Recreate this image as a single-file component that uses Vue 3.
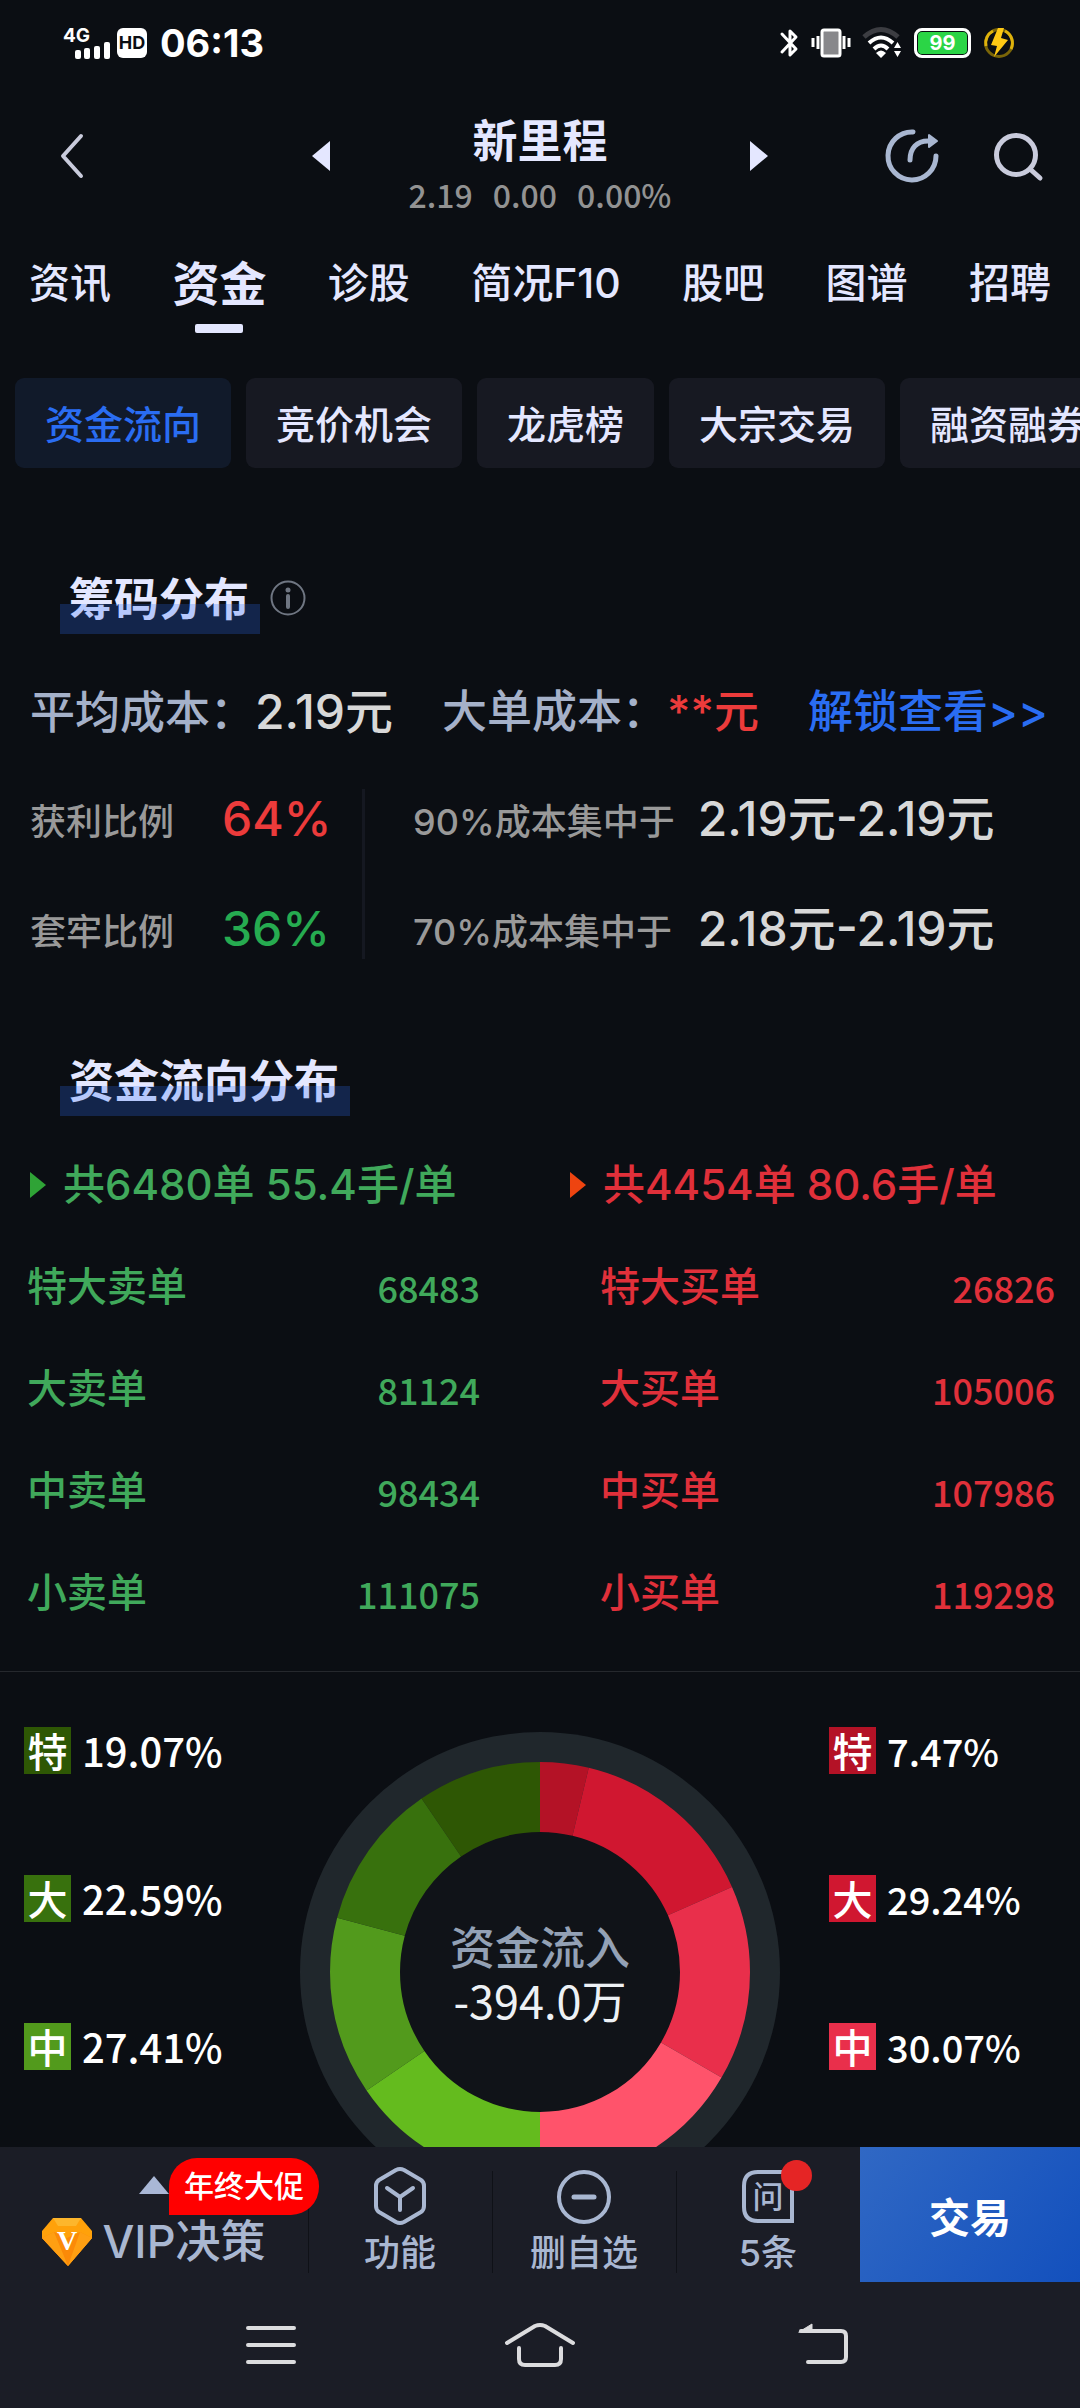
<template>
  <div class="page">
    <!-- system status bar -->
    <div class="status-bar">
      <div class="status-left">
        <svg class="signal" width="50" height="34" viewBox="0 0 50 34">
          <text x="0" y="16" class="net">4G</text>
          <rect x="12" y="24" width="6" height="9" rx="2" />
          <rect x="21" y="22" width="6" height="11" rx="2" />
          <rect x="31" y="20" width="6" height="13" rx="2" />
          <rect x="41" y="16" width="6" height="17" rx="2" />
        </svg>
        <span class="hd">HD</span>
        <span class="time">06:13</span>
      </div>
      <div class="status-right">
        <svg width="20" height="30" viewBox="0 0 20 30" fill="none" stroke="#fff" stroke-width="3" stroke-linejoin="round" stroke-linecap="round">
          <path d="M3 6 17 21 11 27V3L17 9 3 24" />
        </svg>
        <svg width="38" height="30" viewBox="0 0 38 30">
          <rect x="10" y="2" width="18" height="26" rx="2" fill="#88888b" stroke="#fff" stroke-width="3" />
          <path d="M1 10v9M6 8v13M32 8v13M37 10v9" stroke="#fff" stroke-width="3" />
        </svg>
        <svg width="38" height="30" viewBox="0 0 38 30" fill="none">
          <path d="M1 9Q18-6 35 9" stroke="#3c3d42" stroke-width="5" />
          <path d="M6 15Q18 4 30 15" stroke="#fff" stroke-width="4" />
          <path d="M11 21Q18 14 25 21" stroke="#fff" stroke-width="4" />
          <path d="M13 25Q18 20 23 25L18 30Z" fill="#fff" />
          <path d="M31 20 34.500 14 38 20ZM31 23H38L34.500 29Z" fill="#fff" />
        </svg>
        <div class="battery">99</div>
        <svg width="30" height="30" viewBox="0 0 30 30">
          <circle cx="15" cy="15" r="13.500" fill="none" stroke="#7a6508" stroke-width="3" />
          <path d="M2 18A13.500 13.500 0 0 1 9 3M21 3A13.500 13.500 0 0 1 27 21" fill="none" stroke="#dfb20c" stroke-width="3" />
          <path d="M14 0H20L17 10 24 12 10 29 13 18 7 17Z" fill="#ffc914" />
        </svg>
      </div>
    </div>

    <!-- stock header -->
    <header class="header">
      <button class="icon-btn back" aria-label="返回">
        <svg width="22" height="44" viewBox="0 0 22 44" fill="none" stroke="#c9cbdc" stroke-width="4" stroke-linecap="round" stroke-linejoin="round">
          <path d="M20 2 2 22 20 42" />
        </svg>
      </button>
      <div class="switcher">
        <button class="icon-btn" aria-label="上一只">
          <svg width="18" height="30" viewBox="0 0 18 30"><path d="M18 0V30L0 15Z" fill="#e4e7ff" /></svg>
        </button>
        <div class="stock">
          <h1>{{ stock.name }}</h1>
          <p>
            <span>{{ stock.price }}</span>
            <span>{{ stock.change }}</span>
            <span>{{ stock.percent }}</span>
          </p>
        </div>
        <button class="icon-btn" aria-label="下一只">
          <svg width="18" height="30" viewBox="0 0 18 30"><path d="M0 0V30L18 15Z" fill="#e4e7ff" /></svg>
        </button>
      </div>
      <div class="actions">
        <button class="icon-btn" aria-label="分享">
          <svg width="54" height="54" viewBox="0 0 54 54" fill="none" stroke="#a9b7d1" stroke-width="5" stroke-linecap="round">
            <path d="M28 3A24 24 0 1 0 51 27" />
            <path d="M25 31C25 19 32 12 43 12" />
            <path d="M44 6V18L52 12Z" fill="#a9b7d1" stroke-width="2" stroke-linejoin="round" />
          </svg>
        </button>
        <button class="icon-btn" aria-label="搜索">
          <svg width="50" height="50" viewBox="0 0 50 50" fill="none" stroke="#c9cbdc" stroke-width="5" stroke-linecap="round">
            <circle cx="22" cy="24" r="19.500" />
            <path d="M36 38 46 47" />
          </svg>
        </button>
      </div>
    </header>

    <nav class="tabs">
      <button
        v-for="tab in tabs"
        :key="tab"
        :class="['tab', { active: tab === activeTab }]"
        @click="activeTab = tab"
      >{{ tab }}</button>
    </nav>

    <nav class="chips">
      <button
        v-for="chip in chips"
        :key="chip"
        :class="['chip', { active: chip === activeChip }]"
        @click="activeChip = chip"
      >{{ chip }}</button>
    </nav>

    <main class="content">
      <section class="cost">
        <div class="title-row">
          <h2>筹码分布</h2>
          <button class="icon-btn" aria-label="说明">
            <svg width="36" height="36" viewBox="0 0 36 36">
              <circle cx="18" cy="18" r="16.500" fill="none" stroke="#6f7682" stroke-width="2" />
              <circle cx="18" cy="10" r="2.500" fill="#6f7682" />
              <path d="M18 16V27" stroke="#6f7682" stroke-width="4" stroke-linecap="round" />
            </svg>
          </button>
        </div>
        <div class="cost-line">
          <p>平均成本：<b>2.19元</b></p>
          <p>大单成本：<b class="red">**元</b></p>
          <a href="#">解锁查看&gt;&gt;</a>
        </div>
        <div class="ratios">
          <dl class="ratio-left">
            <dt>获利比例</dt><dd class="red">64%</dd>
            <dt>套牢比例</dt><dd class="green">36%</dd>
          </dl>
          <dl class="ratio-right">
            <dt>90%成本集中于</dt><dd>2.19元-2.19元</dd>
            <dt>70%成本集中于</dt><dd>2.18元-2.19元</dd>
          </dl>
        </div>
      </section>

      <section class="flow">
        <div class="title-row">
          <h2>资金流向分布</h2>
        </div>
        <div class="flow-grid">
          <div v-for="side in flow" :key="side.key" :class="['side', side.key]">
            <h3>{{ side.summary }}</h3>
            <table>
              <tbody>
                <tr v-for="row in side.rows" :key="row[0]">
                  <th scope="row">{{ row[0] }}</th>
                  <td>{{ row[1] }}</td>
                </tr>
              </tbody>
            </table>
          </div>
        </div>
      </section>

      <section class="chart">
        <ul class="legend">
          <li v-for="item in sells.slice(0, 3)" :key="item.tag">
            <i :style="{ background: item.color }">{{ item.tag }}</i>
            <span>{{ item.value }}%</span>
          </li>
        </ul>
        <svg class="donut" viewBox="0 0 480 480">
          <circle cx="240" cy="240" r="240" fill="#20272c" />
          <circle cx="240" cy="240" r="141" fill="#101318" />
          <g fill="none" stroke-width="70" transform="rotate(-90 240 240)">
            <circle
              v-for="arc in arcs"
              :key="arc.color"
              cx="240"
              cy="240"
              r="175"
              pathLength="200"
              :stroke="arc.color"
              :stroke-dasharray="`${arc.value} 200`"
              :stroke-dashoffset="-arc.start"
            />
          </g>
          <text x="240" y="233" class="donut-label">资金流入</text>
          <text x="240" y="287" class="donut-value">-394.0万</text>
        </svg>
        <ul class="legend right">
          <li v-for="item in buys.slice(0, 3)" :key="item.tag">
            <i :style="{ background: item.color }">{{ item.tag }}</i>
            <span>{{ item.value }}%</span>
          </li>
        </ul>
      </section>
    </main>

    <!-- bottom toolbar -->
    <footer class="toolbar">
      <button class="tool vip">
        <svg class="caret" width="30" height="18" viewBox="0 0 30 18"><path d="M15 0 30 18H0Z" fill="#a9b7d6" /></svg>
        <span class="promo">年终大促</span>
        <span class="vip-text">
          <svg width="50" height="48" viewBox="0 0 50 48">
            <path d="M11 0H39L50 13V20L26 48 0 20V13Z" fill="#ffa10a" />
            <path d="M11 0H39L34 8H16Z" fill="#fdb62c" />
            <path d="M0 20 12 14 25 20 38 14 50 20 26 48Z" fill="#fb8a08" />
            <path d="M0 20 12 14 26 48ZM50 20 38 14 26 48Z" fill="#ff9f12" />
            <text x="25" y="32" class="gem-v">V</text>
          </svg>
          VIP决策
        </span>
      </button>
      <button class="tool">
        <svg width="54" height="58" viewBox="0 0 54 58" fill="none" stroke="#a9b7d1" stroke-width="4" stroke-linecap="round" stroke-linejoin="round">
          <path d="M23 3Q27 1 31 3L48 13Q51 15 51 19V39Q51 43 48 45L31 55Q27 57 23 55L6 45Q3 43 3 39V19Q3 15 6 13Z" />
          <path d="M14 21 27 30 40 21M27 30V43" />
        </svg>
        功能
      </button>
      <button class="tool">
        <svg width="54" height="58" viewBox="0 0 54 58" fill="none" stroke="#a9b7d1" stroke-width="4" stroke-linecap="round">
          <circle cx="27" cy="30" r="25" />
          <path d="M17 30H37" stroke-width="5" />
        </svg>
        删自选
      </button>
      <button class="tool">
        <svg width="54" height="58" viewBox="0 0 54 58" fill="none" stroke="#a9b7d1" stroke-width="4">
          <path d="M51 54H17Q3 54 3 40V19Q3 5 17 5H51Z" />
          <text x="27" y="41" class="ask">问</text>
        </svg>
        <span class="dot"></span>
        5条
      </button>
      <button class="trade">交易</button>
    </footer>

    <!-- system navigation -->
    <div class="sys-nav">
      <button class="icon-btn" aria-label="菜单">
        <svg width="70" height="44" viewBox="0 0 70 44" stroke="#dcdcde" stroke-width="4" stroke-linecap="round">
          <path d="M14 5H60M14 22H60M14 39H60" />
        </svg>
      </button>
      <button class="icon-btn" aria-label="主页">
        <svg width="70" height="44" viewBox="0 0 70 44" fill="none" stroke="#dcdcde" stroke-width="4" stroke-linecap="round" stroke-linejoin="round">
          <path d="M2 20 30 3Q35 1 40 3L68 20" />
          <path d="M14 25V36Q14 42 20 42H50Q56 42 56 36V25" />
        </svg>
      </button>
      <button class="icon-btn" aria-label="后退">
        <svg width="70" height="44" viewBox="0 0 70 44" fill="none" stroke="#dcdcde" stroke-width="4" stroke-linecap="round">
          <path d="M25 8H65Q70 8 70 13V34Q70 39 65 39H32" />
          <path d="M23 9 36 1V9Z" fill="#dcdcde" stroke-width="1" />
        </svg>
      </button>
    </div>
  </div>
</template>

<script setup>
import { ref, computed } from 'vue'

const stock = { name: '新里程', price: '2.19', change: '0.00', percent: '0.00%' }

const tabs = ['资讯', '资金', '诊股', '简况F10', '股吧', '图谱', '招聘']
const activeTab = ref('资金')

const chips = ['资金流向', '竞价机会', '龙虎榜', '大宗交易', '融资融券']
const activeChip = ref('资金流向')

const flow = [
  {
    key: 'sell',
    summary: '共6480单 55.4手/单',
    rows: [['特大卖单', 68483], ['大卖单', 81124], ['中卖单', 98434], ['小卖单', 111075]],
  },
  {
    key: 'buy',
    summary: '共4454单 80.6手/单',
    rows: [['特大买单', 26826], ['大买单', 105006], ['中买单', 107986], ['小买单', 119298]],
  },
]

const sells = [
  { tag: '特', value: '19.07', color: '#2e5704' },
  { tag: '大', value: '22.59', color: '#38710d' },
  { tag: '中', value: '27.41', color: '#529a1c' },
  { tag: '小', value: '30.93', color: '#64bb1e' },
]
const buys = [
  { tag: '特', value: '7.47', color: '#b41226' },
  { tag: '大', value: '29.24', color: '#d01730' },
  { tag: '中', value: '30.07', color: '#e92f4b' },
  { tag: '小', value: '33.22', color: '#ff536b' },
]

// buys fill the right half clockwise, sells come back up the left half
const arcs = computed(() => {
  let start = 0
  return [...buys, ...[...sells].reverse()].map((item) => {
    const arc = { color: item.color, value: Number(item.value), start }
    start += arc.value
    return arc
  })
})
</script>

<style>
body {
  margin: 0;
  background: #0b0e13;
}
</style>

<style scoped>
.page {
  height: 100vh;
  display: flex;
  flex-direction: column;
  overflow: hidden;
  background: #0b0e13;
  color: #e4e7ff;
  font-family: Inter, "Noto Sans CJK SC", sans-serif;
  font-weight: 500;
}

h1, h2, h3, p, dl, dd, ul {
  margin: 0;
  padding: 0;
}

button {
  border: 0;
  padding: 0;
  background: none;
  color: inherit;
  font: inherit;
  white-space: nowrap;
  cursor: pointer;
}

svg {
  display: block;
  flex: none;
  overflow: visible;
}

.icon-btn {
  display: flex;
}

.red { color: #ec3b3b; }
.green { color: #26ab50; }

/* status bar */
.status-bar {
  flex: none;
  height: 85px;
  padding: 0 66px 0 63px;
  display: flex;
  align-items: center;
  justify-content: space-between;
  color: #fff;
}

.status-left,
.status-right {
  display: flex;
  align-items: center;
}

.status-right {
  gap: 13px;
}

.signal {
  fill: #fff;
}

.net {
  font-size: 19px;
  font-weight: 700;
}

.hd {
  width: 30px;
  margin: 0 13px 0 4px;
  border-radius: 6px;
  background: #fff;
  color: #0b0e13;
  font-size: 18px;
  font-weight: 700;
  line-height: 30px;
  text-align: center;
}

.time {
  font-size: 38px;
  font-weight: 700;
}

.battery {
  width: 51px;
  border: 3px solid #fff;
  border-radius: 8px;
  background: #2bd546;
  box-shadow: inset 0 0 0 1px #0b0e13;
  font-size: 20px;
  font-weight: 700;
  line-height: 24px;
  text-align: center;
}

/* header */
.header {
  flex: none;
  display: grid;
  grid-template-columns: 1fr 456px 1fr;
  grid-template-rows: 142px;
  align-items: center;
}

.back {
  padding-left: 61px;
}

.switcher {
  display: flex;
  align-items: center;
  justify-content: space-between;
}

.stock {
  padding: 31px 0 7px;
  text-align: center;
}

.stock h1 {
  font-size: 45px;
  line-height: 52px;
  font-weight: 700;
}

.stock p {
  display: flex;
  gap: 20px;
  font-family: "Noto Sans CJK SC", sans-serif;
  font-size: 32px;
  line-height: 52px;
  font-weight: 500;
  color: #929292;
}

.actions {
  display: flex;
  align-items: center;
  justify-content: flex-end;
  gap: 55px;
  padding-right: 36px;
}

/* tabs */
.tabs {
  flex: none;
  height: 112px;
  padding: 0 29px;
  display: flex;
  justify-content: space-between;
  overflow: hidden;
}

.tab {
  position: relative;
  padding-bottom: 6px;
  font-size: 41px;
}

.tab.active {
  font-size: 47px;
  font-weight: 700;
}

.tab.active::after {
  content: "";
  position: absolute;
  left: 50%;
  bottom: 6px;
  width: 48px;
  height: 9px;
  margin-left: -24px;
  border-radius: 2px;
  background: #e4e7ff;
}

.chips {
  flex: none;
  padding: 39px 0 0 15px;
  display: flex;
  gap: 15px;
  overflow: hidden;
}

.chip {
  flex: none;
  height: 90px;
  padding: 0 30px 2px;
  border-radius: 9px;
  background: #171922;
  font-size: 39px;
}

.chip.active {
  background: #111a2a;
  color: #2a6df2;
}

/* content */
.content {
  flex: 1;
  min-height: 0;
  overflow: hidden;
}

.title-row {
  display: flex;
  align-items: center;
  gap: 10px;
  padding-left: 60px;
}

.title-row h2 {
  position: relative;
  padding: 4px 11px 0 9px;
  font-size: 45px;
  line-height: 68px;
  font-weight: 700;
}

/* translucent marker stroke laid over the lower half of the title */
.title-row h2::after {
  content: "";
  position: absolute;
  left: 0;
  right: 0;
  bottom: 0;
  height: 30px;
  background: rgba(42, 109, 242, 0.25);
}

.cost {
  padding-top: 94px;
}

.cost-line {
  padding: 0 32px 0 30px;
  margin-top: 42px;
  display: flex;
  justify-content: space-between;
  font-size: 45px;
  line-height: 72px;
  white-space: nowrap;
  color: #a5b1c9;
}

.cost-line b {
  font-size: 48px;
  font-weight: 500;
  color: #d8d8d8;
}

.cost-line b.red {
  font-size: 45px;
  color: #ec3b3b;
}

.cost-line a {
  color: #2a6df2;
  text-decoration: none;
}

.ratios {
  margin-top: 40px;
  display: flex;
  white-space: nowrap;
}

.ratios dl {
  display: grid;
  grid-auto-rows: 60px;
  row-gap: 50px;
  align-items: center;
}

.ratios dt {
  font-size: 36px;
  color: #999;
}

.ratios dd {
  font-size: 48px;
  line-height: 60px;
}

.ratio-left {
  width: 332px;
  padding-left: 30px;
  grid-template-columns: 192px auto;
  border-right: 3px solid #151821;
}

.ratio-right {
  padding-left: 48px;
  grid-template-columns: auto auto;
  column-gap: 23px;
}

.ratio-right dd {
  color: #d8d8d8;
}

.flow {
  padding-top: 85px;
}

.flow-grid {
  display: grid;
  grid-template-columns: 1fr 1fr;
  padding-top: 36px;
  border-bottom: 1px solid #25282d;
}

.sell { color: #40a95b; }
.buy { color: #e0303a; }

.side h3 {
  display: flex;
  align-items: center;
  gap: 17px;
  padding-left: 30px;
  font-size: 42px;
  line-height: 66px;
  font-weight: 500;
}

.side h3::before {
  content: "";
  border: solid transparent;
  border-width: 13px 0 13px 16px;
  border-left-color: #2fa336;
}

.side.buy h3::before {
  border-left-color: #ee4410;
}

.side table {
  width: 100%;
  margin: 18px 0 27px;
  border-collapse: collapse;
}

.side tr {
  height: 102px;
}

.side th {
  padding: 0 0 6px 27px;
  font-size: 40px;
  font-weight: 500;
  text-align: left;
}

.side td {
  padding: 0 60px 0 0;
  font-family: "Noto Sans CJK SC", sans-serif;
  font-size: 36px;
  font-weight: 500;
  text-align: right;
}

.side.buy th {
  padding-left: 60px;
}

.side.buy td {
  padding-right: 25px;
}

/* donut */
.chart {
  display: grid;
  grid-template-columns: 1fr 480px 1fr;
  align-items: start;
  padding-top: 55px;
}

.legend {
  list-style: none;
  display: grid;
  gap: 101px;
  padding-left: 24px;
}

.legend.right {
  padding-left: 49px;
}

.legend li {
  display: flex;
  align-items: center;
  gap: 11px;
  height: 47px;
  color: #fff;
  font-family: "Noto Sans CJK SC", sans-serif;
  font-size: 40px;
  line-height: 47px;
}

.legend i {
  width: 47px;
  font-style: normal;
  text-align: center;
}

.legend.right span {
  font-size: 38px;
}

.donut {
  width: 480px;
  height: 480px;
  margin-top: 5px;
}

.donut-label,
.donut-value {
  text-anchor: middle;
  font-size: 45px;
  fill: #93a1b5;
}

.donut-value {
  font-family: "Noto Sans CJK SC", sans-serif;
  font-weight: 400;
  fill: #edf1f5;
}

/* toolbar */
.toolbar {
  flex: none;
  height: 135px;
  display: grid;
  grid-template-columns: 308fr 184fr 184fr 184fr 220fr;
  background: #1b1d26;
  color: #a9b7d1;
}

.tool {
  position: relative;
  display: flex;
  flex-direction: column;
  align-items: center;
  padding-top: 20px;
  font-size: 36px;
  line-height: 56px;
}

.tool + .tool::before {
  content: "";
  position: absolute;
  left: 0;
  top: 24px;
  bottom: 9px;
  width: 1px;
  background: #0f1117;
}

.vip {
  font-size: 45px;
  padding-top: 29px;
}

.vip-text {
  display: flex;
  align-items: center;
  gap: 10px;
  padding-top: 20px;
}

.promo {
  position: absolute;
  z-index: 1;
  left: 169px;
  top: 11px;
  padding: 0 15px;
  border-radius: 28px 28px 28px 0;
  background: #f00;
  color: #fff;
  font-size: 30px;
  line-height: 57px;
}

.gem-v {
  text-anchor: middle;
  font-family: "Liberation Serif", serif;
  font-size: 28px;
  font-weight: 700;
  fill: #fff;
}

.ask {
  text-anchor: middle;
  font-size: 31px;
  fill: #a9b7d1;
  stroke: none;
}

.dot {
  position: absolute;
  left: 105px;
  top: 13px;
  width: 31px;
  height: 31px;
  border-radius: 50%;
  background: #e52525;
}

.trade {
  background: linear-gradient(125deg, #3068c4, #1350bd);
  color: #fff;
  font-size: 41px;
  font-weight: 700;
}

.sys-nav {
  flex: none;
  height: 126px;
  padding: 0 234px;
  display: flex;
  align-items: center;
  justify-content: space-between;
  background: #1b1d26;
}
</style>
